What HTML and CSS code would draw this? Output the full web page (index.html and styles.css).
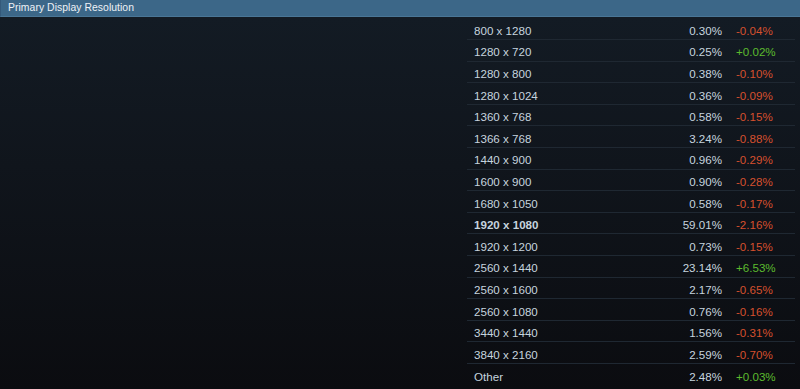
FILE: index.html
```html
<!DOCTYPE html>
<html>
<head>
<meta charset="utf-8">
<link rel="stylesheet" href="styles.css">
</head>
<body>
<div class="panel">
  <div class="panel-header">Primary Display Resolution</div>
  <div class="panel-body">
    <div class="stats">
      <div class="row"><span class="res">800 x 1280</span><span class="pct">0.30%</span><span class="chg neg">-0.04%</span></div>
      <div class="row"><span class="res">1280 x 720</span><span class="pct">0.25%</span><span class="chg pos">+0.02%</span></div>
      <div class="row"><span class="res">1280 x 800</span><span class="pct">0.38%</span><span class="chg neg">-0.10%</span></div>
      <div class="row"><span class="res">1280 x 1024</span><span class="pct">0.36%</span><span class="chg neg">-0.09%</span></div>
      <div class="row"><span class="res">1360 x 768</span><span class="pct">0.58%</span><span class="chg neg">-0.15%</span></div>
      <div class="row"><span class="res">1366 x 768</span><span class="pct">3.24%</span><span class="chg neg">-0.88%</span></div>
      <div class="row"><span class="res">1440 x 900</span><span class="pct">0.96%</span><span class="chg neg">-0.29%</span></div>
      <div class="row"><span class="res">1600 x 900</span><span class="pct">0.90%</span><span class="chg neg">-0.28%</span></div>
      <div class="row"><span class="res">1680 x 1050</span><span class="pct">0.58%</span><span class="chg neg">-0.17%</span></div>
      <div class="row top"><span class="res">1920 x 1080</span><span class="pct">59.01%</span><span class="chg neg">-2.16%</span></div>
      <div class="row"><span class="res">1920 x 1200</span><span class="pct">0.73%</span><span class="chg neg">-0.15%</span></div>
      <div class="row"><span class="res">2560 x 1440</span><span class="pct">23.14%</span><span class="chg pos">+6.53%</span></div>
      <div class="row"><span class="res">2560 x 1600</span><span class="pct">2.17%</span><span class="chg neg">-0.65%</span></div>
      <div class="row"><span class="res">2560 x 1080</span><span class="pct">0.76%</span><span class="chg neg">-0.16%</span></div>
      <div class="row"><span class="res">3440 x 1440</span><span class="pct">1.56%</span><span class="chg neg">-0.31%</span></div>
      <div class="row"><span class="res">3840 x 2160</span><span class="pct">2.59%</span><span class="chg neg">-0.70%</span></div>
      <div class="row"><span class="res">Other</span><span class="pct">2.48%</span><span class="chg pos">+0.03%</span></div>
    </div>
  </div>
</div>
</body>
</html>
```
FILE: styles.css
```css
html, body {
  margin: 0;
  padding: 0;
  height: 100%;
  background: #0b0c10;
}
body {
  font-family: "Liberation Sans", Arial, sans-serif;
  color: #c6d4df;
}
.panel {
  display: flex;
  flex-direction: column;
  height: 389px;
  overflow: hidden;
}
.panel-header {
  height: 17px;
  line-height: 16px;
  padding-left: 7px;
  font-size: 10.4px;
  color: #eef2f6;
  background: #3c6788;
  border-bottom: 1px solid #4a7696;
  border-left: 1px solid #34597a;
  box-sizing: border-box;
  letter-spacing: 0.05px;
}
.panel-body {
  flex: 1;
  background: linear-gradient(to bottom, #131b24 0%, #10151c 40%, #0b0c10 100%);
  padding: 1.5px 5px 0 467px;
}
.stats {
  display: flex;
  flex-direction: column;
}
.row {
  display: grid;
  grid-template-columns: 180px 68px 1fr;
  align-items: center;
  height: 21.6px;
  box-sizing: border-box;
  padding: 3px 0 0 7px;
  border-bottom: 1px solid #1f2832;
  font-size: 11.6px;
}
.row:last-child {
  border-bottom: none;
}
.pct {
  text-align: right;
}
.chg {
  padding-left: 14px;
}
.neg { color: #d6502e; }
.pos { color: #5cba2e; }
.top .res { font-weight: bold; }
```
